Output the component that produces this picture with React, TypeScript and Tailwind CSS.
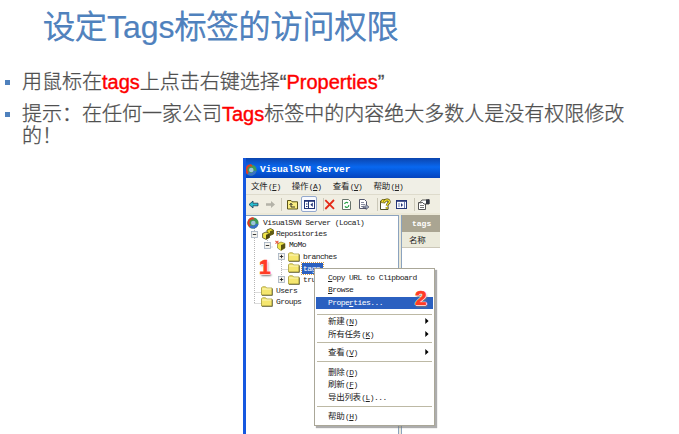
import React from "react";

const mono = "font-['Liberation_Mono','Noto_Sans_CJK_SC',monospace]";

function Zh({ children }: { children: React.ReactNode }) {
  return (
    <span className="font-['Noto_Sans_CJK_SC',sans-serif] text-[8.5px] tracking-[-0.3px]">
      {children}
    </span>
  );
}

function Label({ zh, k, tail = "" }: { zh: string; k: string; tail?: string }) {
  return (
    <span className="whitespace-pre">
      <Zh>{zh}</Zh> <span className="-ml-[3.7px]">(</span><span className="underline decoration-[0.7px] underline-offset-1">{k}</span>){tail}
    </span>
  );
}

function Folder() {
  return (
    <svg width="12" height="10" viewBox="0 0 12 10" className="shrink-0">
      <path d="M.5 9V1.8L1.5 .8H4.6L5.6 2H11V9Z" fill="#f5e66f" stroke="#a59a35" strokeWidth=".8" />
      <path d="M1.2 3H10.4" stroke="#fffbd0" strokeWidth=".8" />
      <path d="M1 9.4H11.4V2.6" fill="none" stroke="#4d4a27" strokeWidth=".7" />
    </svg>
  );
}

function Ball() {
  return (
    <svg width="12" height="12" viewBox="0 0 12 12" className="shrink-0">
      <circle cx="6" cy="6" r="5.6" fill="#3f9b54" />
      <path d="M2.6 10.4A5.6 5.6 0 0 1 6.5 .4L7.5 3A3 3 0 0 0 3.8 8Z" fill="#e23a25" />
      <path d="M2.6 10.4A5.6 5.6 0 0 0 11.5 7L8.8 6.5A3 3 0 0 1 3.8 8Z" fill="#3a70c8" />
      <circle cx="6.3" cy="6" r="2.3" fill="#9cc6dc" />
    </svg>
  );
}

function Toggle({ open }: { open?: boolean }) {
  return (
    <svg width="7" height="7" viewBox="0 0 7 7" className="shrink-0">
      <rect x=".5" y=".5" width="6" height="6" fill="#f4f3ee" stroke="#a3b0bf" strokeWidth=".8" />
      <path d={open ? "M1.8 3.5H5.2" : "M1.8 3.5H5.2M3.5 1.8V5.2"} stroke="#222" strokeWidth=".9" />
    </svg>
  );
}

function Cubes() {
  return (
    <svg width="12" height="12" viewBox="0 0 12 12" className="shrink-0">
      <path d="M5 2L8.5 .5L11.5 2V6L8 7.5L5 6Z" fill="#e5d92d" stroke="#37350c" strokeWidth=".7" />
      <path d="M8 3.2V7.5L11.5 6V2Z" fill="#605b13" />
      <path d="M.6 5.5L4 4L7.5 5.5V9.5L4 11.4L.6 9.7Z" fill="#f1e64a" stroke="#37350c" strokeWidth=".7" />
      <path d="M4 6.8V11.4L7.5 9.5V5.5Z" fill="#4c470e" />
    </svg>
  );
}

function Repo() {
  return (
    <svg width="11" height="11" viewBox="0 0 11 11" className="shrink-0">
      <path d="M2.5 3.5L6 2L10 3.5V8L6 10.5L2.5 8Z" fill="#f1e64a" stroke="#77701b" strokeWidth=".6" />
      <path d="M6 5V10.5L10 8V3.5Z" fill="#5b5514" />
      <path d="M.4 .8L3.8 3.8M.5 3.6L3.4 .9" stroke="#e8553f" strokeWidth="1.1" />
    </svg>
  );
}

function Row({ indent, children }: { indent: string; children: React.ReactNode }) {
  return <div className={`flex h-[11.4px] items-center whitespace-pre ${indent}`}>{children}</div>;
}

function Sep() {
  return <div className="mx-[2px] h-px bg-[#bdb9a5]" />;
}

function Item({ children, arrow, h = "h-[12.6px]" }: { children: React.ReactNode; arrow?: boolean; h?: string }) {
  return (
    <div className={`flex items-center justify-between pr-[5px] pl-[13px] whitespace-pre ${h}`}>
      <span>{children}</span>
      {arrow && (
        <svg width="4" height="6" viewBox="0 0 4 6">
          <path d="M.3 0L3.6 3L.3 6Z" fill="#000" />
        </svg>
      )}
    </div>
  );
}

function Toolbar() {
  return (
    <svg width="194" height="19" viewBox="0 0 194 19" className="block">
      <path d="M3 9.5L7 6V8.2H12V10.8H7V13Z" fill="#26bfd0" stroke="#173b55" strokeWidth=".8" />
      <path d="M29 9.5L25 6V8.2H20V10.8H25V13Z" fill="#b4b3a8" />
      <path d="M35.5 3V16M77.5 3V16M131.5 3V16M168.5 3V16" stroke="#cbc8b8" />
      <path d="M41.5 14V5.5H45L46 6.8H51.5V14Z" fill="#f9ed83" stroke="#5b5418" />
      <path d="M45 12H49M45 12V8.5M43.5 10L45 8.3L46.5 10" fill="none" stroke="#222" strokeWidth=".9" />
      <rect x="55.5" y="1.5" width="15" height="15" rx="1.5" fill="#f9faff" stroke="#93a8cd" />
      <rect x="58.5" y="5.5" width="10" height="8" fill="#fff" stroke="#233577" />
      <path d="M58 6H69" stroke="#233577" strokeWidth="1.6" />
      <path d="M62.5 6V13M60 9H61.5M60 11.5H61.5" stroke="#233577" strokeWidth="1" />
      <path d="M66.8 7.5L64.4 9.8L66.8 12Z" fill="#233577" />
      <path d="M79.3 5.2L88 13.8M88 5L79.3 14" stroke="#e52a17" strokeWidth="1.8" />
      <path d="M96.5 4.5H102.5L104.5 6.5V14.5H96.5Z" fill="#fff" stroke="#68736b" />
      <path d="M98.6 9A2 2 0 0 1 102 8M102.7 10A2 2 0 0 1 99 11.4" fill="none" stroke="#24a042" strokeWidth="1.2" />
      <path d="M113.5 4.5H118.5L120.5 6.5V13.5H113.5Z" fill="#fff" stroke="#55596e" />
      <path d="M115 7.5H118M115 9.5H119M115 11.5H117" stroke="#555a75" strokeWidth=".7" />
      <path d="M117 11.2H120V9.4L123 12L120 14.5V12.7H117Z" fill="#a3adbf" stroke="#3f4359" strokeWidth=".6" />
      <path d="M134.5 6H142V14.5H134.5Z" fill="#fff" stroke="#4e502b" />
      <path d="M134.5 7.5L136 4.5H139V8Z" fill="#f0d92b" stroke="#5b5418" strokeWidth=".7" />
      <path d="M138.5 7C139 4 143.7 4.3 143.4 7C143.2 8.5 141 8.6 141 10.6M141 12V13.7" fill="none" stroke="#514b0b" strokeWidth="2.5" />
      <path d="M138.5 7C139 4 143.7 4.3 143.4 7C143.2 8.5 141 8.6 141 10.6M141 12V13.7" fill="none" stroke="#f6e431" strokeWidth="1.4" />
      <rect x="150.5" y="5.5" width="10" height="8" fill="#f9faff" stroke="#233577" />
      <path d="M150 6H161" stroke="#233577" strokeWidth="1.6" />
      <path d="M153 8V12M158.5 7V13" stroke="#697cb0" />
      <path d="M155 8L157 10L155 12Z" fill="#233577" />
      <path d="M172.5 7.5H179.5V14.5H172.5Z" fill="#fff" stroke="#555" />
      <path d="M174 10.5H178M174 12.5H178" stroke="#555" strokeWidth=".8" />
      <path d="M173.5 8L176 5H180L183 4.5V9H178L176.5 7.5Z" fill="#fff" stroke="#333" strokeWidth=".8" />
      <path d="M180 4.5H183.5V9H180Z" fill="#303540" />
    </svg>
  );
}

function ContextMenu() {
  return (
    <div className="absolute top-[110px] left-[68px] h-[158px] w-[121px] border border-[#aaa798] bg-white pt-[2.5px] shadow-[2px_2px_1px_#77777799]">
      <Item><u className="underline-offset-1">C</u>opy URL to Clipboard</Item>
      <Item><u className="underline-offset-1">B</u>rowse</Item>
      <div className="mr-[1px] ml-[1px] bg-[#2b60c0] text-white">
        <div className="flex h-[12.4px] items-center pl-[12px]">
          <span>Prope<u className="underline-offset-1">r</u>ties...</span>
        </div>
      </div>
      <div className="h-[5px]" />
      <Sep />
      <Item arrow><Label zh="新建" k="N" /></Item>
      <Item arrow><Label zh="所有任务" k="K" /></Item>
      <div className="h-[2px]" />
      <Sep />
      <Item arrow h="h-[18px]"><Label zh="查看" k="V" /></Item>
      <Sep />
      <div className="h-[3px]" />
      <Item><Label zh="删除" k="D" /></Item>
      <Item><Label zh="刷新" k="F" /></Item>
      <Item><Label zh="导出列表" k="L" tail="..." /></Item>
      <div className="h-[3px]" />
      <Sep />
      <Item h="h-[18px]"><Label zh="帮助" k="H" /></Item>
    </div>
  );
}

function Marker({ n, place }: { n: string; place: string }) {
  return (
    <span className={`absolute font-['Liberation_Sans',sans-serif] text-[21px] leading-[21px] font-bold tracking-normal text-[#ff3b25] [-webkit-text-stroke:0.7px_#ff3b25] [text-shadow:1px_0_#fff,-1px_0_#fff,0_1px_#fff,0_-1px_#fff,1px_2px_2px_#777] ${place}`}>
      {n}
    </span>
  );
}

function ServerWindow() {
  return (
    <div className={`relative ml-[243px] flex h-[276px] w-[197px] flex-col overflow-hidden border-l-[3px] border-[#1558e0] bg-[#ece9d8] text-[8px] tracking-[-0.58px] text-[#222] ${mono}`}>
      <div className="-ml-[3px] flex h-[20px] shrink-0 items-center gap-[3px] bg-linear-to-b from-[#0b45ae] via-[#0868f0] via-45% to-[#0443bd] pt-[4px] pl-[2px] text-[9.5px] font-bold tracking-[-0.05px] text-white">
        <Ball />
        <span>VisualSVN Server</span>
      </div>
      <div className="flex h-[16px] shrink-0 items-center gap-[11.2px] bg-[#f0efe6] pl-[5px]">
        <Label zh="文件" k="F" />
        <Label zh="操作" k="A" />
        <Label zh="查看" k="V" />
        <Label zh="帮助" k="H" />
      </div>
      <div className="h-[19px] shrink-0 border-t border-[#dedbcc] bg-[#f0eee2]"><Toolbar /></div>
      <div className="flex min-h-0 flex-1 pt-[2px]">
        <div className="relative w-[153px] border-t border-r border-[#8ba3bf] bg-white pt-[1px]">
          <svg width="60" height="90" viewBox="0 0 60 90" className="absolute top-0 left-0" fill="none" stroke="#b6b6b6" strokeDasharray="1 1">
            <path d="M8.5 12V87M8.5 76.5H16M8.5 87.5H16M21.5 30V32M35.5 42V64M35.5 53.5H42M21.5 24V31H27" />
          </svg>
          <div className="relative">
            <Row indent="pl-[1px]"><Ball /><span className="pl-[4px]">VisualSVN Server (Local)</span></Row>
            <Row indent="pl-[5px]"><Toggle open /><span className="w-[4px]" /><Cubes /><span className="pl-[2px]">Repositories</span></Row>
            <Row indent="pl-[18px]"><Toggle open /><span className="w-[4px]" /><Repo /><span className="pl-[3px]">MoMo</span></Row>
            <Row indent="pl-[32px]"><Toggle /><span className="w-[3px]" /><Folder /><span className="pl-[3px]">branches</span></Row>
            <Row indent="pl-[42px]"><Folder /><span className="ml-[2px] h-[11px] w-[21px] bg-[#2b60c0] pl-[1px] leading-[11px] text-white outline outline-dotted outline-[#d29a45]">tags</span></Row>
            <Row indent="pl-[32px]"><Toggle /><span className="w-[3px]" /><Folder /><span className="pl-[3px]">trunk</span></Row>
            <Row indent="pl-[15px]"><Folder /><span className="pl-[3px]">Users</span></Row>
            <Row indent="pl-[15px]"><Folder /><span className="pl-[3px]">Groups</span></Row>
          </div>
        </div>
        <div className="w-[2px] bg-[#ece9d8]" />
        <div className="flex-1 border-l border-[#8ba3bf] bg-white">
          <div className="h-[17px] bg-[#aaa592] pl-[10px] text-[8px] leading-[18px] font-bold tracking-[0] text-white">tags</div>
          <div className="h-[16px] border-b border-[#cbc7b8] bg-[#ebeadb] pl-[7px] leading-[15px]"><Zh>名称</Zh></div>
        </div>
      </div>
      <ContextMenu />
      <Marker n="1" place="left-[13px] top-[98px]" />
      <Marker n="2" place="left-[169px] top-[129px]" />
    </div>
  );
}

function Red({ children }: { children: React.ReactNode }) {
  return <span className="text-[#fe0000] [-webkit-text-stroke:0.4px_#fe0000]">{children}</span>;
}

export default function App() {
  return (
    <main className="h-[434px] w-[679px] overflow-hidden bg-white font-['Liberation_Sans','Noto_Sans_CJK_SC',sans-serif]">
      <div className="h-[158px]">
        <h1 className="h-[71px] pt-[7px] pl-[43px] text-[32px] leading-[40px] font-light whitespace-nowrap text-[#4f81bd] [-webkit-text-stroke:0.9px_#4f81bd]">
          设定<span className="[-webkit-text-stroke:0.2px_#4f81bd]">Tags</span>标签的访问权限
        </h1>
        <ul className="text-[20px] leading-[22px] font-light text-[#505050] [-webkit-text-stroke:0.3px_#505050]">
          <li className="flex h-[32px] gap-[12px] pl-[5px]">
            <span className="mt-[9px] h-[5px] w-[5px] shrink-0 bg-[#4f81bd]" />
            <p className="whitespace-nowrap">用鼠标在<Red>tags</Red>上点击右键选择“<Red>Properties</Red>”</p>
          </li>
          <li className="flex gap-[12px] pl-[5px]">
            <span className="mt-[9px] h-[5px] w-[5px] shrink-0 bg-[#4f81bd]" />
            <p className="whitespace-nowrap">提示：在任何一家公司<Red>Tags</Red>标签中的内容绝大多数人是没有权限修改<br />的！</p>
          </li>
        </ul>
      </div>
      <ServerWindow />
    </main>
  );
}
